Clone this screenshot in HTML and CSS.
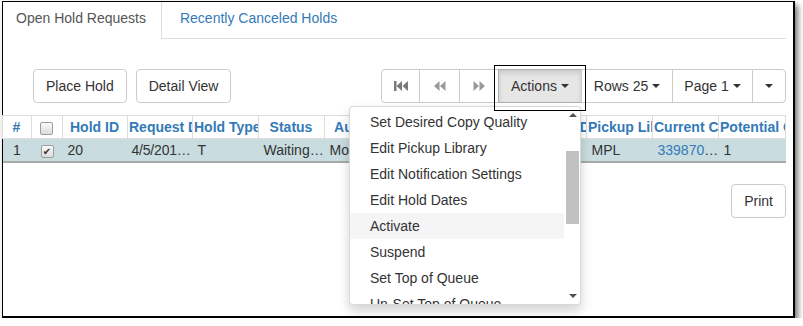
FILE: index.html
```html
<!DOCTYPE html>
<html lang="en">
<head>
    <meta charset="UTF-8">
    <title>Holds</title>
    <link rel="stylesheet" href="styles.css">
</head>
<body>
  <div class="frame">

    <ul class="tabs">
      <li class="tab active"><a href="#">Open Hold Requests</a></li>
      <li class="tab"><a href="#">Recently Canceled Holds</a></li>
    </ul>

    <div class="toolbar">
      <div class="btn-row">
        <button class="btn">Place Hold</button>
        <button class="btn">Detail View</button>
      </div>

      <div class="btn-group">
        <button class="btn gbtn w1 disabled">
          <svg width="14" height="10" viewBox="0 0 14 10"><rect x="0" y="0" width="2.5" height="10"/><path d="M8 0 L2.5 5 L8 10 Z M14 0 L8.5 5 L14 10 Z"/></svg>
        </button>
        <button class="btn gbtn w2">
          <svg width="13" height="10" viewBox="0 0 13 10"><path d="M6.5 0 L1 5 L6.5 10 Z M12.5 0 L7 5 L12.5 10 Z"/></svg>
        </button>
        <button class="btn gbtn w3">
          <svg width="13" height="10" viewBox="0 0 13 10"><path d="M0.5 0 L6 5 L0.5 10 Z M6.5 0 L12 5 L6.5 10 Z"/></svg>
        </button>
        <button class="btn gbtn w4 pressed">Actions <span class="caret"></span></button>
        <button class="btn gbtn w5">Rows 25 <span class="caret"></span></button>
        <button class="btn gbtn w6">Page 1 <span class="caret"></span></button>
        <button class="btn gbtn w7"><span class="caret"></span></button>
      </div>
    </div>

    <table class="grid">
      <colgroup>
        <col style="width:29px"><col style="width:31px"><col style="width:65px"><col style="width:65px">
        <col style="width:66px"><col style="width:66px"><col style="width:66px"><col style="width:66px">
        <col style="width:65px"><col style="width:65px"><col style="width:66px"><col style="width:66px">
        <col style="width:67px">
      </colgroup>
      <thead>
        <tr>
          <th>#</th>
          <th><span class="check"></span></th>
          <th>Hold ID</th>
          <th>Request Date</th>
          <th>Hold Type</th>
          <th>Status</th>
          <th>Author</th>
          <th>Title</th>
          <th>Call Number</th>
          <th>Capture Date</th>
          <th>Pickup Library</th>
          <th>Current Copy</th>
          <th>Potential Copies</th>
        </tr>
      </thead>
      <tbody>
        <tr class="selected">
          <td class="num">1</td>
          <td class="num"><span class="check checked">&#10004;</span></td>
          <td>20</td>
          <td class="tight">4/5/2017 10:21 AM</td>
          <td>T</td>
          <td>Waiting for Copy</td>
          <td>Mountains of the World</td>
          <td>Mountains of the World</td>
          <td>551.43 MOU</td>
          <td></td>
          <td>MPL</td>
          <td><a href="#">33987000012345</a></td>
          <td>1</td>
        </tr>
      </tbody>
    </table>

    <div class="print-row">
      <button class="btn">Print</button>
    </div>

    <!-- open Actions menu -->
    <div class="menu">
      <ul class="menu-list">
        <li>Set Desired Copy Quality</li>
        <li>Edit Pickup Library</li>
        <li>Edit Notification Settings</li>
        <li>Edit Hold Dates</li>
        <li class="hover">Activate</li>
        <li>Suspend</li>
        <li>Set Top of Queue</li>
        <li>Un-Set Top of Queue</li>
      </ul>
      <div class="scrollbar">
        <span class="arrow up"></span>
        <span class="thumb"></span>
        <span class="arrow down"></span>
      </div>
    </div>

    <div class="callout"></div>

  </div>
</body>
</html>
```

FILE: styles.css
```css
body {
    margin: 0;
    font-family: "Liberation Sans", Arial, sans-serif;
    font-size: 14px;
    line-height: 20px;
    color: #333;
    background: #fff;
}

.frame {
    position: relative;
    box-sizing: border-box;
    margin: 1px 0 0 2px;
    width: 793px;
    height: 317px;
    border: 1px solid #000;
    border-right-width: 2px;
    border-bottom-width: 2px;
    padding: 0 7px 0 0;
    background: #fff;
    box-shadow: 3px 4px 6px rgba(0, 0, 0, 0.55);
}

/* tabs */
.tabs {
    display: flex;
    margin: 0;
    padding: 0;
    list-style: none;
    border-bottom: 1px solid #ddd;
    height: 36px;
}
.tab a {
    display: block;
    padding: 6px 15px 10px 18px;
    color: #337ab7;
    text-decoration: none;
}
.tab.active a {
    padding-left: 13px;
    color: #555;
    background: #fff;
    border-right: 1px solid #ddd;
    height: 21px;
}

/* buttons */
.btn {
    box-sizing: border-box;
    height: 34px;
    padding: 6px 12px;
    font-family: inherit;
    font-size: 14px;
    line-height: 20px;
    color: #333;
    background: #fff;
    border: 1px solid #ccc;
    border-radius: 4px;
}

.toolbar {
    display: flex;
    justify-content: space-between;
    margin-top: 30px;
    padding-left: 30px;
}
.btn-row {
    display: flex;
    gap: 9px;
}

.btn-group {
    display: flex;
}
.gbtn {
    border-radius: 0;
    margin-left: -1px;
    padding: 6px 0;
    display: flex;
    align-items: center;
    justify-content: center;
}
.gbtn:first-child {
    margin-left: 0;
    border-radius: 4px 0 0 4px;
}
.gbtn:last-child {
    border-radius: 0 4px 4px 0;
}
.gbtn svg {
    fill: #9a9a9a;
}
.gbtn.disabled svg {
    fill: #7a7a7a;
}
.w1 { width: 39px; }
.w2 { width: 41px; }
.w3 { width: 40px; }
.w4 { width: 84px; }
.w5 { width: 92px; }
.w6 { width: 81px; }
.w7 { width: 34px; }

.pressed {
    background: #e6e6e6;
    border-color: #adadad;
    box-shadow: inset 0 3px 5px rgba(0, 0, 0, 0.125);
}

.caret {
    display: inline-block;
    width: 0;
    height: 0;
    margin-left: 4px;
    border-top: 4px solid #333;
    border-left: 4px solid transparent;
    border-right: 4px solid transparent;
}
.w7 .caret {
    margin-left: 0;
}

/* grid */
.grid {
    margin-top: 12px;
    margin-left: -1px;
    width: 784px;
    table-layout: fixed;
    border-collapse: collapse;
}
.grid th {
    height: 22px;
    padding: 0 2px 0 1px;
    border: 1px solid #ddd;
    color: #337ab7;
    font-weight: bold;
    text-align: center;
    white-space: nowrap;
    overflow: hidden;
}
.grid td {
    height: 22px;
    padding: 0 0 0 5px;
    white-space: nowrap;
    overflow: hidden;
    text-overflow: ellipsis;
}
.grid td.tight {
    padding-left: 4px;
    letter-spacing: -0.2px;
}
.grid td.num {
    padding: 0;
    text-align: center;
    text-overflow: clip;
}
.grid tr.selected td {
    background: #c9dce0;
    border-bottom: 2px solid #a9a9a9;
}
.grid a {
    color: #337ab7;
    text-decoration: none;
}

.check {
    display: inline-block;
    box-sizing: border-box;
    width: 13px;
    height: 13px;
    vertical-align: middle;
    border: 1px solid #9c9c9c;
    border-radius: 2px;
    background: linear-gradient(#fafafa, #dcdcdc);
    font-size: 10px;
    line-height: 11px;
    font-weight: normal;
    color: #333;
    text-align: center;
    font-family: "DejaVu Sans", sans-serif;
}

.print-row {
    display: flex;
    justify-content: flex-end;
    margin-top: 21px;
}

/* dropdown */
.menu {
    position: absolute;
    left: 346px;
    top: 104px;
    box-sizing: border-box;
    width: 232px;
    height: 199px;
    background: #fff;
    border: 1px solid rgba(0, 0, 0, 0.15);
    border-radius: 4px;
    box-shadow: 0 6px 12px rgba(0, 0, 0, 0.175);
    overflow: hidden;
}
.menu-list {
    margin: 0;
    padding: 2px 0 0;
    list-style: none;
    width: 214px;
}
.menu-list li {
    padding: 3px 20px;
    line-height: 20px;
    white-space: nowrap;
    color: #333;
}
.menu-list li.hover {
    background: #f5f5f5;
}
.scrollbar {
    position: absolute;
    right: 1px;
    top: 0;
    bottom: 0;
    width: 14px;
    background: #fff;
}
.thumb {
    position: absolute;
    left: 1px;
    right: 0;
    top: 44px;
    height: 73px;
    background: #c1c1c1;
}
.arrow {
    position: absolute;
    left: 4px;
    width: 0;
    height: 0;
    border-left: 4px solid transparent;
    border-right: 4px solid transparent;
}
.arrow.up {
    top: 6px;
    border-bottom: 4px solid #505050;
}
.arrow.down {
    bottom: 6px;
    border-top: 4px solid #505050;
}

/* highlight box round the Actions button */
.callout {
    position: absolute;
    left: 491px;
    top: 63px;
    width: 90px;
    height: 44px;
    border: 1px solid #000;
}
```
